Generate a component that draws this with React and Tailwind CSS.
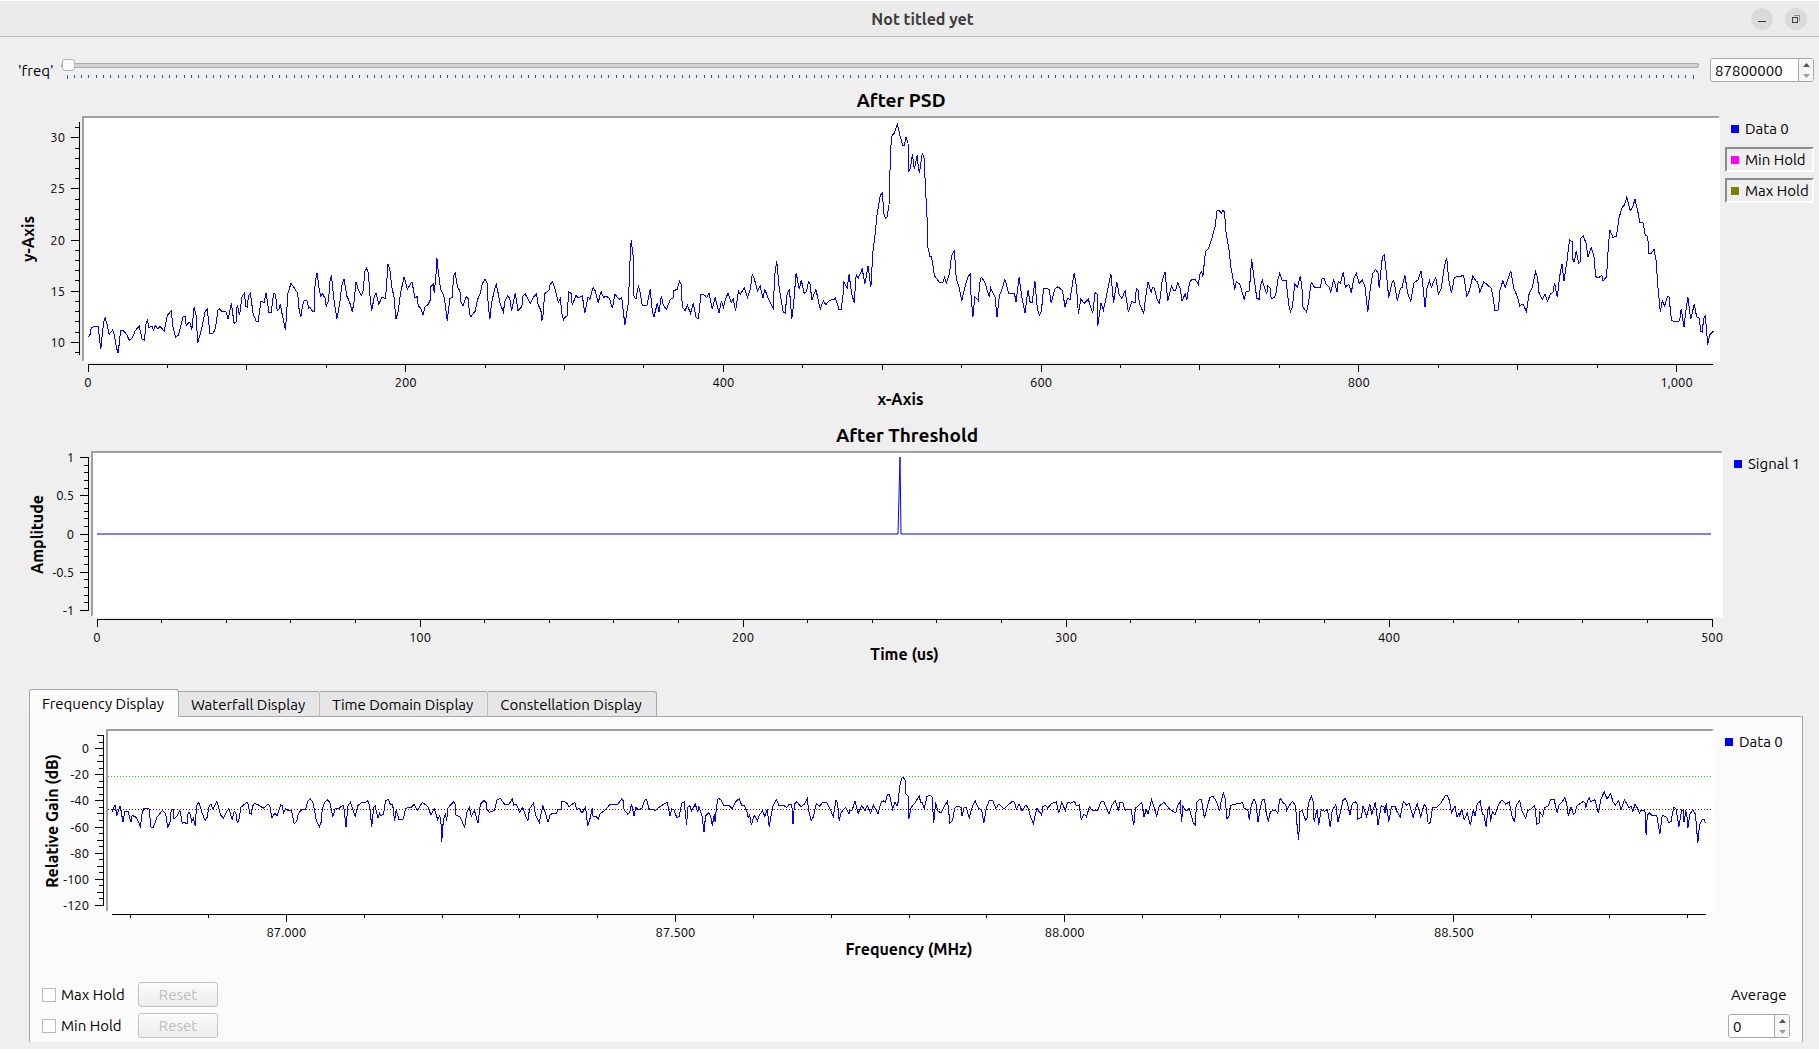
import React, { useState } from 'react';

// Sweeps are recorded in columns 1568 units wide, three units to the pixel in height.
const COLUMN_UNITS = 1568;

const psdSweep = [
    {
        x: 0,
        width: 620,
        points:
            '223,1010 228,1003 231,983 238,980 248,980 255,1048 262,965 266,953 271,975 276,1003 285,990 290,1010 294,1042 299,1060 305,992 312,992 320,1003 327,1021 335,1013 342,992 352,978 359,1017 365,1021 370,965 373,960 376,982 385,980 388,991 393,977 399,987 405,979 415,994 423,946 433,933 438,985 444,1012 452,1004 463,950 468,950 471,976 478,967 481,969 485,990 491,922 496,945 500,1030 510,985 519,933 524,928 531,1002 540,998 545,985 551,930 556,926 560,933 571,933 577,958 585,910 592,970 597,965 600,914 606,945 612,890 618,880 622,920 626,922 628,888 633,880 640,940 648,964 653,964 660,903 668,908 673,878 680,937 686,937 692,880 697,883 701,932 705,928 709,913 714,945 722,990 728,880 736,850 742,860 753,880 757,935 761,952 765,915 770,900 776,900 781,925 784,920 790,934 795,934 797,850 802,818 808,875 811,887 816,882 822,895 825,920 831,900 834,845 838,826 844,895 852,956 859,910 864,860 870,836 877,888 884,905 891,935 896,900 900,845 906,868 914,886 919,870 922,815 927,805 932,818 935,880 940,932 946,893 951,878 958,913 965,893 975,895 978,850 981,792 986,810 991,860 997,895 1001,958 1007,935 1012,885 1022,830 1030,868 1042,845 1049,893 1055,890 1058,918 1064,925 1070,945 1075,920 1082,915 1088,900 1090,860 1096,852 1098,880 1103,820 1105,775 1109,820 1114,868 1119,878 1124,895 1131,962 1138,895 1144,893 1147,830 1151,818 1157,860 1163,873 1166,905 1171,918 1179,890 1185,898 1187,942 1191,950 1202,933 1207,900 1215,880 1220,850 1227,838 1232,850 1235,920 1239,957 1243,910 1250,872 1255,853 1260,880 1265,912 1273,936 1277,903 1284,888 1289,895 1294,933 1303,878 1310,932 1320,920 1322,890 1328,881 1334,895 1341,910 1348,893 1357,882 1361,915 1368,930 1370,963 1374,940 1377,882 1389,870 1391,855 1397,845 1404,868 1412,908 1417,895 1421,940 1425,961 1430,950 1434,948 1437,900 1438,875 1444,880 1447,915 1457,886 1462,893 1473,888 1479,940 1487,890 1492,898 1500,862 1505,872 1513,908',
    },
    {
        x: 600,
        width: 620,
        points:
            '0,885 3,876 9,893 15,888 24,895 31,925 38,883 48,898 55,893 63,975 72,905 75,800 79,720 84,770 86,888 91,898 97,856 102,880 107,918 119,915 127,867 132,930 136,952 145,910 149,937 155,888 160,915 168,928 178,898 185,893 187,872 195,868 201,843 206,855 208,920 215,932 221,916 229,940 236,910 243,953 249,955 255,883 264,885 270,893 276,880 284,928 291,892 301,940 307,902 312,923 318,895 324,880 332,908 337,897 343,932 350,873 355,882 365,863 373,892 380,868 385,823 390,835 398,872 405,857 412,895 417,868 425,895 438,925 442,825 447,782 453,860 458,900 463,935 468,940 473,885 479,866 485,958 490,905 496,818 504,868 509,840 516,880 522,875 527,845 531,852 536,900 546,868 557,928 565,902 571,914 580,902 593,897 595,893 600,910 604,928 610,928 615,880 617,845 625,865 630,823 636,880 643,908 648,822 653,835 663,807 670,852 678,798 685,862 690,760 697,690 700,650 709,585 714,580 718,640 722,655 726,650 731,615 735,450 738,408 745,398 752,373 759,408 765,435 769,438 774,412 779,430 781,513 785,505 790,462 795,508 802,466 806,510 808,520 815,458 820,475 823,560 827,650 829,740 834,768 838,768 846,828 859,848 868,846 871,832 876,848 884,820 889,768 896,750 901,838 908,860 915,902 922,865 930,832 936,822 938,880 943,952 948,890 957,902 960,850 964,832 973,845 984,890 988,864 999,890 1004,952 1010,885 1015,875 1024,838 1034,882 1048,880 1052,905 1060,832 1068,900 1075,940 1080,890 1083,870 1087,905 1093,908 1100,843 1106,925 1111,946 1116,935 1122,865 1136,868 1141,910 1150,868 1158,860 1170,872 1176,922 1182,895 1189,898 1199,820 1205,860 1210,942 1216,898 1225,910 1235,898 1246,940 1252,878 1257,882 1259,978 1267,908 1273,930 1281,888 1286,855 1292,823 1299,908 1307,845 1313,885 1320,895 1328,872 1336,935 1345,905 1354,908 1356,865 1361,870 1364,910 1375,940 1380,890 1386,845 1394,878 1397,862 1402,865 1408,895 1415,910 1422,840 1429,815 1436,903 1445,858 1451,872 1456,870 1461,848 1467,865 1472,903 1480,882 1484,900 1491,848 1497,838 1506,840 1513,853',
    },
    {
        x: 1200,
        width: 619,
        points:
            '0,822 4,815 7,830 14,755 22,745 31,712 38,680 43,632 49,632 54,640 58,632 62,635 66,700 74,752 78,800 84,840 88,870 92,845 101,853 112,898 117,875 125,873 131,778 137,835 144,895 150,898 153,855 158,842 169,882 172,858 178,865 180,895 188,893 192,885 197,840 202,820 209,843 218,842 225,915 229,935 234,920 240,853 247,862 254,828 259,870 261,922 270,936 275,905 282,847 290,862 305,862 309,836 315,836 319,852 328,862 331,878 338,840 343,855 347,877 350,845 356,850 363,815 368,862 377,852 383,878 390,835 396,820 403,850 411,840 418,860 425,935 432,860 438,820 445,808 451,820 454,865 462,770 467,765 473,830 478,893 487,845 491,842 500,902 508,865 512,862 519,825 526,880 534,903 542,848 552,840 560,813 564,850 570,922 575,865 581,842 586,862 597,832 604,882 611,865 619,800 625,773 630,840 637,878 644,835 650,830 668,827 676,890 683,870 691,828 699,843 703,845 709,877 719,845 738,865 743,895 747,932 756,930 760,870 767,843 773,862 787,812 795,865 804,890 810,918 818,912 827,935 834,880 842,862 850,815 855,832 859,880 867,898 874,883 880,903 888,882 894,878 898,848 905,892 911,830 917,793 922,843 930,780 936,720 943,725 945,785 949,783 953,753 959,790 963,785 965,715 971,708 978,730 983,772 991,742 998,770 1002,830 1010,833 1018,825 1021,843 1030,830 1034,745 1038,690 1046,712 1055,708 1061,655 1069,623 1075,615 1081,592 1090,632 1096,620 1102,598 1110,640 1114,668 1122,668 1128,705 1134,710 1137,760 1143,760 1150,748 1155,780 1160,860 1166,935 1171,903 1177,918 1184,890 1188,890 1194,960 1204,966 1215,962 1219,927 1226,982 1231,930 1236,890 1243,958 1252,912 1258,950 1264,953 1269,995 1273,997 1275,960 1280,945 1286,1035 1291,1005 1301,993',
    },
];

const gainSweep = [
    {
        x: 0,
        width: 620,
        points:
            '283,400 290,379 292,379 295,412 304,380 311,430 316,396 324,396 331,430 334,410 341,412 346,418 355,442 360,400 364,388 377,390 382,445 387,447 397,415 411,394 419,405 424,447 431,425 433,392 438,392 440,420 447,412 455,394 461,433 466,430 473,435 476,400 480,402 485,428 489,418 494,440 497,380 503,370 511,402 519,425 524,415 528,385 533,375 539,390 548,368 553,385 558,408 565,418 570,405 579,388 587,422 592,397 596,400 600,430 604,425 609,385 625,370 628,378 632,403 636,405 638,382 644,373 654,378 666,388 677,376 682,380 688,417 695,402 701,410 710,378 714,380 717,402 722,389 727,393 737,393 744,435 750,428 755,403 763,392 773,390 779,365 785,360 792,372 800,425 808,443 812,430 815,390 822,368 828,363 834,370 842,413 848,388 855,390 866,380 869,380 875,445 880,380 886,370 898,412 905,380 915,370 924,370 930,365 935,380 940,443 945,385 949,382 956,418 960,402 963,410 970,405 975,365 982,362 987,375 993,375 998,425 1002,393 1009,422 1020,420 1026,388 1040,385 1047,376 1055,395 1068,370 1082,383 1090,408 1098,388 1107,422 1112,410 1115,425 1117,490 1121,425 1126,405 1130,425 1132,388 1147,368 1151,375 1153,408 1164,415 1175,445 1181,400 1187,385 1192,412 1200,395 1209,433 1215,375 1224,364 1230,372 1232,392 1238,400 1250,395 1257,362 1266,358 1272,370 1277,377 1287,375 1296,360 1299,378 1305,375 1309,385 1314,400 1322,385 1330,413 1335,425 1339,390 1349,373 1355,410 1364,430 1373,380 1380,405 1386,430 1391,408 1398,403 1408,403 1411,390 1419,390 1421,367 1432,370 1439,383 1454,370 1459,393 1465,388 1472,403 1481,383 1486,440 1492,420 1498,388 1500,413 1507,412 1513,420',
    },
    {
        x: 600,
        width: 620,
        points:
            '0,405 5,400 10,397 25,377 45,376 55,360 59,365 61,393 70,405 75,400 80,375 86,412 90,385 98,393 106,388 113,363 118,362 125,393 135,392 140,394 155,380 170,370 177,412 181,390 187,393 194,415 200,413 207,373 213,368 219,438 222,385 227,380 232,395 241,375 247,400 250,383 254,395 258,410 263,458 267,410 275,402 280,410 284,440 289,405 291,428 295,380 299,357 306,363 313,380 320,380 326,378 334,390 345,365 352,360 358,378 365,378 373,403 375,418 378,405 383,438 390,408 398,425 403,408 411,395 417,413 423,390 428,443 432,415 437,382 446,362 453,380 463,378 472,385 478,377 485,378 488,435 492,375 498,368 508,383 517,375 524,358 528,395 534,425 540,413 547,373 556,382 563,370 568,372 573,370 580,385 590,413 597,362 601,375 605,425 609,402 621,385 630,405 632,395 638,393 645,365 653,403 662,380 670,395 676,380 684,402 692,378 703,405 711,370 716,365 722,370 727,345 732,345 740,390 746,370 751,380 754,370 758,320 764,295 767,295 772,305 773,345 779,350 781,420 787,385 798,370 807,350 811,370 815,370 820,390 827,352 836,349 840,355 844,432 849,370 854,395 862,402 873,378 879,365 885,432 892,423 897,388 903,382 913,385 915,412 921,385 926,385 934,417 942,380 949,365 957,388 965,392 971,432 977,388 984,365 993,363 1001,388 1009,375 1022,390 1032,378 1043,367 1048,370 1053,390 1060,375 1067,395 1077,378 1083,388 1090,417 1096,433 1105,388 1109,395 1114,403 1117,410 1120,383 1126,378 1132,387 1141,375 1154,368 1160,403 1168,370 1177,395 1182,370 1190,373 1200,367 1205,380 1212,378 1217,422 1224,405 1230,413 1238,383 1245,395 1258,395 1267,368 1274,368 1287,405 1295,378 1303,365 1311,395 1315,370 1322,370 1328,395 1335,390 1343,393 1350,437 1354,388 1370,370 1376,415 1381,390 1386,405 1395,363 1400,380 1408,412 1414,382 1426,370 1440,390 1456,402 1461,380 1467,368 1471,428 1474,382 1482,397 1490,388 1500,430 1505,437 1509,370',
    },
    {
        x: 1200,
        width: 619,
        points:
            '0,360 4,363 11,418 18,385 25,355 33,352 42,368 50,395 54,365 59,342 64,360 68,418 73,415 77,380 87,376 108,371 112,388 121,392 125,422 130,378 137,360 142,375 147,430 152,390 158,362 164,363 168,405 173,425 178,400 185,393 191,393 197,403 201,370 203,358 211,372 217,376 220,395 227,378 234,367 242,380 246,440 250,482 253,398 258,393 268,425 272,415 274,375 282,352 287,368 289,428 296,392 301,437 307,392 316,397 323,393 330,445 335,395 344,376 349,430 355,403 362,365 368,358 373,370 380,408 386,373 394,368 398,375 400,420 409,415 413,380 422,412 430,375 435,408 444,370 451,437 459,380 467,385 469,403 472,372 478,428 485,383 495,382 498,395 507,415 515,367 523,378 530,373 540,415 550,373 559,413 568,376 573,385 578,435 584,430 589,385 600,385 610,373 620,352 626,348 632,365 637,403 646,382 651,415 656,402 657,415 663,390 669,422 677,402 685,438 692,393 697,412 702,375 710,367 715,405 719,405 725,445 729,390 734,382 735,430 741,398 747,408 757,375 765,362 775,376 783,368 790,410 797,430 801,378 810,365 815,395 825,418 830,395 838,390 848,380 853,435 859,432 861,400 868,412 873,385 881,383 888,363 897,362 905,402 909,378 918,368 924,355 929,375 933,410 940,385 946,405 950,403 955,380 970,368 975,370 977,388 982,365 986,357 990,368 1000,362 1009,403 1015,362 1024,338 1031,360 1040,343 1046,368 1052,378 1060,365 1067,392 1075,362 1086,385 1093,383 1096,400 1102,375 1110,392 1113,402 1117,393 1127,393 1130,467 1133,408 1139,402 1145,410 1157,410 1160,430 1165,465 1171,408 1182,415 1187,430 1193,428 1200,385 1206,390 1213,443 1220,393 1224,395 1226,430 1230,398 1233,405 1236,447 1241,405 1248,393 1255,405 1261,492 1265,440 1272,422 1277,422 1281,433',
    },
];

const sweepToPoints = (sweep) =>
    sweep
        .flatMap((column) =>
            column.points.split(' ').map((pair) => {
                const [px, py] = pair.split(',').map(Number);
                return `${(column.x + (px * column.width) / COLUMN_UNITS).toFixed(1)},${(py / 3).toFixed(1)}`;
            })
        )
        .join(' ');

const range = (from, to, step) => {
    const count = Math.round((to - from) / step);
    return Array.from({ length: count + 1 }, (_, i) => Number((from + i * step).toFixed(3)));
};

const isMultiple = (value, step) => Math.abs(value / step - Math.round(value / step)) < 0.001;

const tickLength = (value, axis) => {
    if (isMultiple(value, axis.major)) return 8;
    if (axis.mid && isMultiple(value, axis.mid)) return 6;
    return 4;
};

const XAxis = ({ axis }) => (
    <svg className="block h-[27px] w-full overflow-visible text-[13px]" aria-hidden="true">
        <line x1="0" x2="100%" y1="2.5" y2="2.5" stroke="black" shapeRendering="crispEdges" />
        {range(axis.first, axis.last, axis.minor).map((value) => {
            const x = `${((value - axis.min) / (axis.max - axis.min)) * 100}%`;
            return (
                <g key={value}>
                    <line
                        x1={x}
                        x2={x}
                        y1="2"
                        y2={2 + tickLength(value, axis)}
                        stroke="black"
                        shapeRendering="crispEdges"
                    />
                    {isMultiple(value, axis.major) && (
                        <text x={x} y="25" textAnchor="middle">
                            {axis.format ? axis.format(value) : value}
                        </text>
                    )}
                </g>
            );
        })}
    </svg>
);

const YAxis = ({ axis }) => {
    const toY = (value) =>
        Math.round(axis.top + ((axis.max - value) / (axis.max - axis.min)) * (axis.bottom - axis.top)) + 0.5;

    return (
        <svg className="block h-full w-11 overflow-visible text-[13px]" aria-hidden="true">
            <line
                x1="41.5"
                x2="41.5"
                y1={axis.top}
                y2={axis.bottom + 1}
                stroke="black"
                shapeRendering="crispEdges"
            />
            {range(axis.first, axis.last, axis.minor).map((value) => (
                <g key={value}>
                    <line
                        x1={41 - tickLength(value, axis)}
                        x2="41"
                        y1={toY(value)}
                        y2={toY(value)}
                        stroke="black"
                        shapeRendering="crispEdges"
                    />
                    {isMultiple(value, axis.major) && (
                        <text x="27" y={toY(value) + 4} textAnchor="end">
                            {value}
                        </text>
                    )}
                </g>
            ))}
        </svg>
    );
};

const LegendItem = ({ label, color, hidden }) => (
    <button
        type="button"
        className={`flex h-[25px] w-full items-center gap-1.5 border-2 pl-1 text-left whitespace-nowrap ${
            hidden ? 'border-t-[#8c8c8c] border-r-white border-b-white border-l-[#8c8c8c]' : 'border-transparent'
        }`}
    >
        <span className={`size-2 shrink-0 ${color}`}></span>
        {label}
    </button>
);

const Plot = ({ title, xTitle, yTitle, columns, canvas, inset, xAxis, yAxis, legend, markers = [], children }) => (
    <section className={`grid ${columns}`}>
        {title && <h2 className="col-start-2 mb-1 text-center text-[19px] leading-6 font-bold">{title}</h2>}

        <div className="col-start-1 flex justify-end">
            <span className="rotate-180 self-center text-center text-[16px] leading-5 font-bold whitespace-nowrap [writing-mode:vertical-rl]">
                {yTitle}
            </span>
            <YAxis axis={yAxis} />
        </div>
        <div
            className={`relative col-start-2 border-2 border-t-[#9f9f9f] border-r-white border-b-white border-l-[#9f9f9f] bg-white ${canvas}`}
        >
            {markers.length > 0 && (
                <svg className="absolute inset-0 h-full w-full" aria-hidden="true">
                    {markers.map((marker) => (
                        <line
                            key={marker.y}
                            x1="0"
                            x2="100%"
                            y1={marker.y}
                            y2={marker.y}
                            stroke={marker.color}
                            strokeDasharray="1 2"
                            shapeRendering="crispEdges"
                        />
                    ))}
                </svg>
            )}
            <div className={`relative -mx-0.5 h-full ${inset}`}>{children}</div>
        </div>
        <div className="col-start-3 flex flex-col gap-1.5 pr-[5px] pl-[5px] text-[15px] leading-5">
            {legend.map((item) => (
                <LegendItem key={item.label} {...item} />
            ))}
        </div>

        <div className={`col-start-2 ${inset}`}>
            <XAxis axis={xAxis} />
        </div>
        <h3 className={`col-start-2 text-center text-[16px] leading-5 font-bold ${inset}`}>{xTitle}</h3>
    </section>
);

const Trace = ({ viewBox, points, smooth }) => (
    <svg className="block h-full w-full overflow-visible" viewBox={viewBox} preserveAspectRatio="none" aria-hidden="true">
        <polyline
            points={points}
            fill="none"
            stroke="blue"
            strokeWidth="1"
            vectorEffect="non-scaling-stroke"
            shapeRendering={smooth ? 'auto' : 'crispEdges'}
        />
    </svg>
);

const SpinBox = ({ id, label, value, onChange, step, width }) => (
    <div className={`flex h-6 overflow-hidden rounded-[3px] border border-[#a8a8a8] bg-white ${width}`}>
        <input
            id={id}
            aria-label={label}
            type="text"
            inputMode="numeric"
            value={value}
            onChange={(e) => onChange(Number(e.target.value) || 0)}
            className="w-0 grow pt-0.5 pl-1 text-[15px] leading-5 outline-none"
        />
        <div className="flex w-[15px] flex-col border-l border-[#a8a8a8] bg-[#f6f6f6]">
            <button
                type="button"
                aria-label="Increase"
                onClick={() => onChange(value + step)}
                className="flex flex-1 items-center justify-center"
            >
                <svg width="7" height="4" viewBox="0 0 7 4">
                    <path d="M3.5 0L7 4H0Z" fill="#555" />
                </svg>
            </button>
            <button
                type="button"
                aria-label="Decrease"
                onClick={() => onChange(value - step)}
                className="flex flex-1 items-center justify-center"
            >
                <svg width="7" height="4" viewBox="0 0 7 4">
                    <path d="M0 0H7L3.5 4Z" fill="#a0a0a0" />
                </svg>
            </button>
        </div>
    </div>
);

const TitleBar = () => (
    <header className="flex h-[37px] items-center border-t border-b border-t-white border-b-[#bdbdbd] bg-[#ebebeb] pr-3">
        <h1 className="grow pl-[94px] text-center text-[16px] leading-5 font-bold text-[#3d3d3d]">Not titled yet</h1>
        <div className="flex gap-3">
            <button
                type="button"
                aria-label="Minimize"
                className="flex size-[22px] items-center justify-center rounded-full bg-[#dadada]"
            >
                <svg width="22" height="22" viewBox="0 0 22 22" shapeRendering="crispEdges">
                    <path d="M7 13.5H15" stroke="#3d3d3d" />
                </svg>
            </button>
            <button
                type="button"
                aria-label="Restore"
                className="flex size-[22px] items-center justify-center rounded-full bg-[#dadada]"
            >
                <svg width="22" height="22" viewBox="0 0 22 22" fill="none" shapeRendering="crispEdges">
                    <path d="M9 7.5H14.5V13" stroke="#8d8d8d" />
                    <path d="M7.5 9.5H12.5V14.5H7.5Z" stroke="#3d3d3d" />
                </svg>
            </button>
        </div>
    </header>
);

const FREQ_MIN = 87800000;
const FREQ_MAX = 110000000;
const FREQ_STEP = 100000;

const FrequencyControl = () => {
    const [freq, setFreq] = useState(FREQ_MIN);
    const steps = (FREQ_MAX - FREQ_MIN) / FREQ_STEP;

    return (
        <div className="flex items-center pt-[21px] pr-[5px] pl-[18px] text-[15px] leading-5">
            <label htmlFor="freq" className="w-[43px] pt-0.5">
                'freq'
            </label>
            <div className="flex h-5 grow flex-col">
                <input
                    id="freq"
                    type="range"
                    min={FREQ_MIN}
                    max={FREQ_MAX}
                    step={FREQ_STEP}
                    value={freq}
                    onChange={(e) => setFreq(Number(e.target.value))}
                    className="-mt-px block h-3 w-full appearance-none bg-transparent outline-none [&::-webkit-slider-runnable-track]:h-[5px] [&::-webkit-slider-runnable-track]:rounded-xs [&::-webkit-slider-runnable-track]:border [&::-webkit-slider-runnable-track]:border-[#a9a9a9] [&::-webkit-slider-runnable-track]:bg-[#d2d2d2] [&::-webkit-slider-thumb]:-mt-[5px] [&::-webkit-slider-thumb]:h-3 [&::-webkit-slider-thumb]:w-[13px] [&::-webkit-slider-thumb]:appearance-none [&::-webkit-slider-thumb]:rounded-[3px] [&::-webkit-slider-thumb]:border [&::-webkit-slider-thumb]:border-[#b4b4b4] [&::-webkit-slider-thumb]:bg-[#fbfbfb]"
                />
                <div className="mt-1 px-1.5">
                    <svg className="block h-1 w-full overflow-visible" aria-hidden="true">
                        {range(0, steps, 1).map((i) => (
                            <line
                                key={i}
                                x1={`${(i / steps) * 100}%`}
                                x2={`${(i / steps) * 100}%`}
                                y1="0"
                                y2={i === 0 || i === steps ? 4 : 3}
                                stroke="#24618c"
                                shapeRendering="crispEdges"
                            />
                        ))}
                    </svg>
                </div>
            </div>
            <div className="ml-[11px]">
                <SpinBox label="Frequency in hertz" value={freq} onChange={setFreq} step={FREQ_STEP} width="w-[104px]" />
            </div>
        </div>
    );
};

const tabs = ['Frequency Display', 'Waterfall Display', 'Time Domain Display', 'Constellation Display'];

const HoldRow = ({ id, label }) => (
    <div className="flex h-[25px] items-center">
        <input
            id={id}
            type="checkbox"
            className="size-3.5 appearance-none border border-[#b9b9b9] bg-white checked:bg-[#308cc6]"
        />
        <label htmlFor={id} className="w-[82px] pl-[5px]">
            {label}
        </label>
        <button
            type="button"
            disabled
            className="h-[25px] w-20 rounded-[3px] border border-[#c2c2c2] bg-linear-to-b from-[#fbfbfb] to-[#ededed] text-[#bebebe]"
        >
            Reset
        </button>
    </div>
);

const DisplayTabs = () => {
    const [activeTab, setActiveTab] = useState(tabs[0]);
    const [average, setAverage] = useState(0);

    return (
        <div className="mt-[25px] mr-4 mb-[7px] ml-[29px] flex grow flex-col text-[15px] leading-5">
            <div role="tablist" className="flex h-[27px] items-end">
                {tabs.map((tab) => (
                    <button
                        key={tab}
                        type="button"
                        role="tab"
                        aria-selected={activeTab === tab}
                        onClick={() => setActiveTab(tab)}
                        className={`border-[#a8a8a8] pr-3.5 pl-3 ${
                            activeTab === tab
                                ? 'relative -mb-px h-7 rounded-t-[3px] border-x border-t bg-[#fcfcfc]'
                                : 'h-[25px] rounded-tr-[3px] border-t border-r bg-[#e6e6e6] pt-px not-last:border-r-[#bdbdbd]'
                        }`}
                    >
                        {tab}
                    </button>
                ))}
            </div>
            <div className="grow border-x border-t border-[#a8a8a8] bg-[#fbfbfb] pt-3 pb-[3px]">
                <Plot
                    xTitle="Frequency (MHz)"
                    yTitle="Relative Gain (dB)"
                    columns="grid-cols-[76px_1fr_88px]"
                    canvas="h-[183px]"
                    inset="pl-1.5 pr-2"
                    xAxis={{
                        min: 86.776,
                        max: 88.824,
                        first: 86.8,
                        last: 88.8,
                        minor: 0.1,
                        major: 0.5,
                        format: (value) => value.toFixed(3),
                    }}
                    yAxis={{ min: -120, max: 10, top: 6, bottom: 176, first: -120, last: 10, minor: 5, mid: 10, major: 20 }}
                    legend={[{ label: 'Data 0', color: 'bg-[#0000ff]' }]}
                    markers={[
                        { y: 45.5, color: '#00e600' },
                        { y: 78.5, color: '#8b0000' },
                    ]}
                >
                    <Trace viewBox="112 52 1594 179" points={sweepToPoints(gainSweep)} />
                </Plot>

                <div className="mt-[23px] flex justify-between pr-3 pl-3">
                    <div className="flex flex-col gap-1.5">
                        <HoldRow id="max-hold" label="Max Hold" />
                        <HoldRow id="min-hold" label="Min Hold" />
                    </div>
                    <div className="flex flex-col justify-between">
                        <label htmlFor="average" className="h-[25px] pl-[3px] leading-[25px]">
                            Average
                        </label>
                        <SpinBox id="average" value={average} onChange={setAverage} step={1} width="w-[62px]" />
                    </div>
                </div>
            </div>
        </div>
    );
};

const App = () => {
    return (
        <div className="flex min-h-screen flex-col bg-[#efefef] font-['Ubuntu','Open_Sans',sans-serif] text-black">
            <TitleBar />
            <FrequencyControl />

            <div className="mt-1.5">
                <Plot
                    title="After PSD"
                    xTitle="x-Axis"
                    yTitle="y-Axis"
                    columns="grid-cols-[82px_1fr_99px]"
                    canvas="h-[246px]"
                    inset="pl-1.5 pr-[7px]"
                    xAxis={{
                        min: 0,
                        max: 1023,
                        first: 0,
                        last: 1000,
                        minor: 50,
                        mid: 100,
                        major: 200,
                        format: (value) => value.toLocaleString('en-US'),
                    }}
                    yAxis={{ min: 8.8, max: 31.5, top: 6, bottom: 238, first: 9, last: 31, minor: 1, major: 5 }}
                    legend={[
                        { label: 'Data 0', color: 'bg-[#0000ff]' },
                        { label: 'Min Hold', color: 'bg-[#ff00ff]', hidden: true },
                        { label: 'Max Hold', color: 'bg-[#808000]', hidden: true },
                    ]}
                >
                    <Trace viewBox="88 118 1625 242" points={sweepToPoints(psdSweep)} />
                </Plot>
            </div>

            <div className="mt-3.5">
                <Plot
                    title="After Threshold"
                    xTitle="Time (us)"
                    yTitle="Amplitude"
                    columns="grid-cols-[91px_1fr_96px]"
                    canvas="h-[166px]"
                    inset="pl-1.5 pr-[11px]"
                    xAxis={{ min: 0, max: 500, first: 0, last: 500, minor: 20, major: 100 }}
                    yAxis={{ min: -1, max: 1, top: 6, bottom: 159, first: -1, last: 1, minor: 0.1, major: 0.5 }}
                    legend={[{ label: 'Signal 1', color: 'bg-[#0000ff]' }]}
                >
                    <Trace viewBox="97 453 1615 162" points="97,534 898,534 900,457 901,534 1711,534" smooth />
                </Plot>
            </div>

            <DisplayTabs />
        </div>
    );
};

export default App;
